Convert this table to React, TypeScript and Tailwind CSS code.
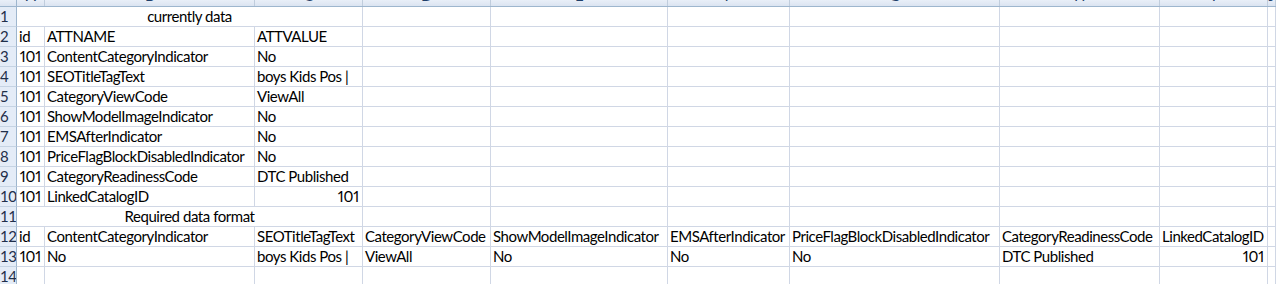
import React from "react";

type Cell = { t?: string; right?: boolean };

const letters = ["A", "B", "C", "D", "E", "F", "G", "H", "I", "J"];

const rows: (Cell[] | { merged: string })[] = [
  { merged: "currently data" },
  [{ t: "id" }, { t: "ATTNAME" }, { t: "ATTVALUE" }],
  [{ t: "101", right: true }, { t: "ContentCategoryIndicator" }, { t: "No" }],
  [{ t: "101", right: true }, { t: "SEOTitleTagText" }, { t: "boys Kids Pos |" }],
  [{ t: "101", right: true }, { t: "CategoryViewCode" }, { t: "ViewAll" }],
  [{ t: "101", right: true }, { t: "ShowModelImageIndicator" }, { t: "No" }],
  [{ t: "101", right: true }, { t: "EMSAfterIndicator" }, { t: "No" }],
  [{ t: "101", right: true }, { t: "PriceFlagBlockDisabledIndicator" }, { t: "No" }],
  [{ t: "101", right: true }, { t: "CategoryReadinessCode" }, { t: "DTC Published" }],
  [{ t: "101", right: true }, { t: "LinkedCatalogID" }, { t: "101", right: true }],
  { merged: "Required data format" },
  [
    { t: "id" },
    { t: "ContentCategoryIndicator" },
    { t: "SEOTitleTagText" },
    { t: "CategoryViewCode" },
    { t: "ShowModelImageIndicator" },
    { t: "EMSAfterIndicator" },
    { t: "PriceFlagBlockDisabledIndicator" },
    { t: "CategoryReadinessCode" },
    { t: "LinkedCatalogID" },
  ],
  [
    { t: "101", right: true },
    { t: "No" },
    { t: "boys Kids Pos |" },
    { t: "ViewAll" },
    { t: "No" },
    { t: "No" },
    { t: "No" },
    { t: "DTC Published" },
    { t: "101", right: true },
  ],
  [],
];

const gridCols =
  "grid grid-cols-[17px_28px_210px_108px_128px_177px_122px_210px_160px_108px_1fr]";

function DataCell({ cell }: { cell?: Cell }) {
  return (
    <div
      className={
        "h-[20px] border-r border-b border-[#d0d7e5] leading-[19px] whitespace-nowrap overflow-hidden " +
        (cell?.right
          ? "text-right pr-[3px] pl-0 proportional-nums tracking-[-0.2px]"
          : "text-left pl-[2px]")
      }
    >
      {cell?.t ?? ""}
    </div>
  );
}

export default function App() {
  return (
    <div
      className="w-[1276px] h-[284px] overflow-hidden bg-white text-black text-[15px] tracking-[-0.45px]"
      style={{ fontFamily: "Lato, 'Liberation Sans', sans-serif" }}
    >
      {/* column header (scrolled, only bottom visible) */}
      <div className="h-[7px] overflow-hidden border-b border-[#9eb6ce] bg-gradient-to-b from-[#e9eff8] to-[#dbe4f1]">
        <div className={gridCols + " -mt-[14px] h-[20px]"}>
          <div className="border-r border-[#9eb6ce]" />
          {letters.map((l) => (
            <div
              key={l}
              className="border-r border-[#c0cddd] text-center leading-[19px] text-[#1f3f6a] overflow-hidden"
            >
              {l}
            </div>
          ))}
        </div>
      </div>
      <div className={gridCols}>
        {rows.map((r, i) => {
          const num = i + 1;
          const header = (
            <div
              key={"h" + num}
              className="h-[20px] bg-[#e4ecf7] border-r border-[#9eb6ce] border-b border-b-[#c5d3e3] leading-[19px] text-[#1f2f4a] pl-0 whitespace-nowrap overflow-hidden"
            >
              {num}
            </div>
          );
          if (!Array.isArray(r)) {
            return (
              <React.Fragment key={num}>
                {header}
                <div className="col-span-3 h-[20px] border-r border-b border-[#d0d7e5] text-center leading-[19px] whitespace-nowrap">
                  {r.merged}
                </div>
                {Array.from({ length: 7 }).map((_, j) => (
                  <DataCell key={j} />
                ))}
              </React.Fragment>
            );
          }
          return (
            <React.Fragment key={num}>
              {header}
              {Array.from({ length: 10 }).map((_, j) => (
                <DataCell key={j} cell={r[j]} />
              ))}
            </React.Fragment>
          );
        })}
      </div>
    </div>
  );
}
